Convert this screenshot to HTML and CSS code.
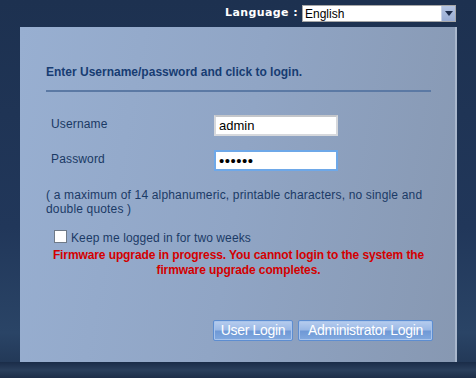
FILE: index.html
```html
<!DOCTYPE html>
<html lang="en">

<head>
    <meta charset="UTF-8" />
    <title>Login</title>
    <link rel="stylesheet" href="styles.css">
</head>

<body>
    <div class="top-bar">
        <span class="lang-label">Language :</span>
        <div class="lang-select">
            <span>English</span>
            <span class="lang-arrow"></span>
        </div>
    </div>

    <div class="panel">
        <h1 class="title">Enter Username/password and click to login.</h1>
        <div class="rule"></div>

        <div class="form-grid">
            <label class="field-label">Username</label>
            <input type="text" class="field" value="admin" />
            <label class="field-label">Password</label>
            <input type="password" class="field active" value="123456" />
        </div>

        <p class="note">( a maximum of 14 alphanumeric, printable characters, no single and double quotes )</p>

        <div class="remember">
            <span class="check"></span>
            <span>Keep me logged in for two weeks</span>
        </div>

        <p class="warning">Firmware upgrade in progress. You cannot login to the system the firmware upgrade completes.</p>

        <div class="buttons">
            <button class="btn user-btn">User Login</button>
            <button class="btn admin-btn">Administrator Login</button>
        </div>
    </div>

    <div class="footer"></div>
</body>

</html>
```

FILE: styles.css
```css
body {
    margin: 0;
    width: 476px;
    height: 378px;
    overflow: hidden;
    background: linear-gradient(to bottom, #1d3150 0%, #21375a 60%, #2a4466 88%, #1f3350 100%);
    font-family: "Liberation Sans", Arial, sans-serif;
}

.top-bar {
    height: 27px;
    display: flex;
    align-items: flex-start;
    justify-content: flex-end;
    padding-right: 20px;
    box-sizing: border-box;
}

.lang-label {
    margin-top: 6px;
    margin-right: 4px;
    font-family: "DejaVu Sans", Verdana, sans-serif;
    font-size: 11px;
    font-weight: bold;
    letter-spacing: 0.4px;
    color: #ffffff;
}

.lang-select {
    margin-top: 5px;
    width: 154px;
    height: 17px;
    box-sizing: border-box;
    background: #ffffff;
    border: 1px solid #a7a7a7;
    display: flex;
    align-items: center;
    justify-content: space-between;
    font-size: 12px;
    color: #000;
    padding-left: 2px;
}

.lang-arrow {
    width: 13px;
    height: 15px;
    background: linear-gradient(to bottom, #b4c4e2, #98acd4);
    border-left: 1px solid #c8d2e6;
    position: relative;
}

.lang-arrow::after {
    content: "";
    position: absolute;
    left: 3px;
    top: 5px;
    border-left: 4px solid transparent;
    border-right: 4px solid transparent;
    border-top: 5px solid #1c2c4c;
}

.panel {
    margin: 0 19px 0 20px;
    height: 335px;
    box-sizing: border-box;
    padding: 38px 24px 0 26px;
    background: linear-gradient(100deg, #98afd1 0%, #90a5c5 50%, #8798b2 100%);
    border-right: 2px solid #a9b7cc;
}

.title {
    margin: 0;
    font-size: 12px;
    line-height: 14px;
    font-weight: bold;
    color: #173c72;
}

.rule {
    margin-top: 11px;
    height: 2px;
    background: #5b79a4;
}

.form-grid {
    margin-top: 23px;
    display: grid;
    grid-template-columns: 168px 124px;
    row-gap: 14px;
    align-items: center;
}

.field-label {
    padding-left: 5px;
    font-size: 12px;
    letter-spacing: 0.15px;
    color: #1a3964;
    position: relative;
    top: -2px;
}

.field {
    width: 124px;
    height: 21px;
    box-sizing: border-box;
    border: 2px solid #d6d8dc;
    border-top-color: #c4c6ca;
    padding: 1px 3px;
    font-family: "Liberation Sans", Arial, sans-serif;
    font-size: 13px;
    color: #000;
    outline: none;
}

.field.active {
    border-color: #6ea8e8;
    font-size: 15px;
    letter-spacing: 0.5px;
}

.note {
    margin: 17px 0 0;
    font-size: 12px;
    line-height: 14px;
    letter-spacing: 0.17px;
    color: #1b3a66;
}

.remember {
    margin-top: 14px;
    margin-left: 8px;
    display: flex;
    align-items: flex-start;
    gap: 4px;
    font-size: 12px;
    line-height: 15px;
    letter-spacing: 0.1px;
    color: #1b3a66;
}

.check {
    width: 13px;
    height: 13px;
    box-sizing: border-box;
    background: #ffffff;
    border: 1px solid #6f7a88;
}

.remember span:last-child {
    margin-top: 1px;
}

.warning {
    margin: 2px 0 0;
    text-align: center;
    font-size: 12px;
    line-height: 15px;
    font-weight: bold;
    letter-spacing: -0.1px;
    color: #d40000;
}

.buttons {
    margin-top: 42px;
    margin-right: -2px;
    display: flex;
    justify-content: flex-end;
    gap: 5px;
}

.btn {
    height: 21px;
    padding: 0;
    white-space: nowrap;
    border: 1px solid #5d8dd0;
    border-radius: 2px;
    background: linear-gradient(to bottom, #b7cdee 0%, #9bb9e6 45%, #6f99d6 55%, #82a9df 100%);
    box-shadow: inset 0 0 0 1px #a8c4ec;
    color: #ffffff;
    font-family: "Liberation Sans", Arial, sans-serif;
    font-size: 14px;
    letter-spacing: -0.3px;
    line-height: 19px;
}

.user-btn {
    width: 80px;
}

.admin-btn {
    width: 135px;
}

.footer {
    height: 16px;
    background: linear-gradient(to bottom, #1a2c48, #2a3f5c 50%, #1d2e48);
}
```
